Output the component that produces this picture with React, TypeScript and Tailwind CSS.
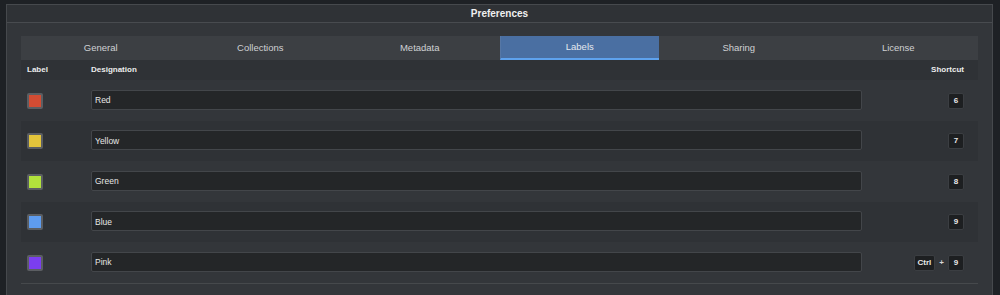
import React from "react";

const tabs = ["General", "Collections", "Metadata", "Labels", "Sharing", "License"];

const labels = [
  { name: "Red", color: "bg-[#d24c33]", keys: ["6"] },
  { name: "Yellow", color: "bg-[#e3c43b]", keys: ["7"] },
  { name: "Green", color: "bg-[#b2e23c]", keys: ["8"] },
  { name: "Blue", color: "bg-[#5e9cef]", keys: ["9"] },
  { name: "Pink", color: "bg-[#7b3ef0]", keys: ["Ctrl", "9"] },
];

const Key = ({ text }: { text: string }) => (
  <span
    className={
      "flex h-[16px] min-w-[16px] items-center justify-center rounded-[2px] border border-[#3b3e42] bg-[#1d1f21] text-[8px] font-bold text-[#e8e8e8] " +
      (text.length > 1 ? "px-[3px]" : "")
    }
  >
    {text}
  </span>
);

const App = () => {
  return (
    <div
      className="h-[295px] w-[1000px] overflow-hidden bg-[#1e2125] pl-[6px] pt-[4px]"
      style={{ fontFamily: '"Liberation Sans", Arial, sans-serif' }}
    >
      <div className="h-[300px] w-[987px] border border-[#46494d] bg-[#33363a]">
        <div className="flex h-[18px] items-center justify-center border-b border-[#484b4f] bg-[#2f3236] text-[10px] font-bold text-[#f0f0f0]">
          Preferences
        </div>
        <div className="px-[14px] pt-[13px]">
          <div className="grid h-[24px] grid-cols-6 bg-[#3c3f43]">
            {tabs.map((t) =>
              t === "Labels" ? (
                <div
                  key={t}
                  className="flex items-center justify-center border-b-2 border-l border-b-[#5ea2ee] border-l-[#5677a5] bg-[#4a6fa2] pt-[1px] text-[9.5px] text-[#e4e8ee]"
                >
                  {t}
                </div>
              ) : (
                <div key={t} className="flex items-center justify-center pt-[1px] text-[9.5px] text-[#cfd1d3]">
                  {t}
                </div>
              )
            )}
          </div>
          <div className="flex h-[20px] items-center bg-[#2f3236] text-[8px] font-bold text-[#ececec]">
            <span className="w-[70px] pl-[6px]">Label</span>
            <span className="flex-1">Designation</span>
            <span className="pr-[14px]">Shortcut</span>
          </div>
          <div className="border-b border-[#46494c]">
            {labels.map((l, i) => (
              <div
                key={l.name}
                className={
                  "flex items-center " +
                  (i % 2 === 0 ? "h-[41px]" : "h-[40px] bg-[#2f3236]")
                }
              >
                <div className="w-[70px] pl-[6px]">
                  <div className="h-[16px] w-[16px] rounded-[2px] border-2 border-[#5b5e62]">
                    <div className={"h-full w-full " + l.color} />
                  </div>
                </div>
                <div className="mb-[2px] flex h-[20px] w-[771px] items-center rounded-[2px] border border-[#43464a] bg-[#242628] pl-[3px] pt-[2px] text-[8.5px] text-[#e6e6e6]">
                  {l.name}
                </div>
                <div className="flex flex-1 items-center justify-end gap-[4px] pr-[14px]">
                  {l.keys.map((k, j) => (
                    <React.Fragment key={k}>
                      {j > 0 && <span className="text-[8px] font-bold text-[#d8d8d8]">+</span>}
                      <Key text={k} />
                    </React.Fragment>
                  ))}
                </div>
              </div>
            ))}
          </div>
        </div>
      </div>
    </div>
  );
};

export default App;
